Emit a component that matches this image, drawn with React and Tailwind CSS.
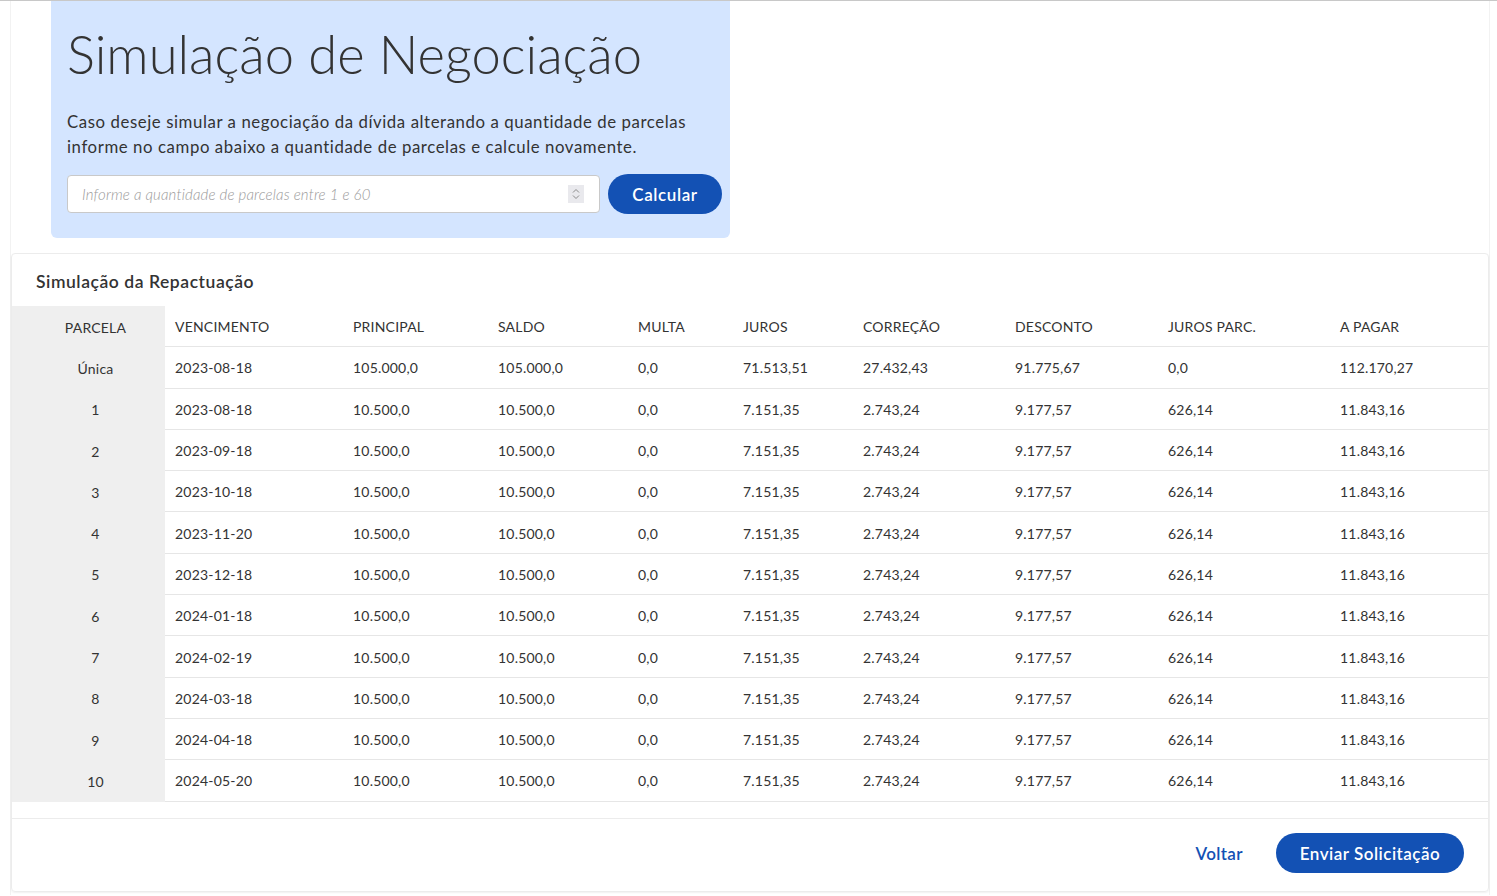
import React from 'react';

const FONT = { fontFamily: 'Lato, "Open Sans", sans-serif' };

const columns = [
  { key: 'parcela', label: 'PARCELA', width: 'w-[153px]' },
  { key: 'vencimento', label: 'VENCIMENTO', width: 'w-[178px]' },
  { key: 'principal', label: 'PRINCIPAL', width: 'w-[145px]' },
  { key: 'saldo', label: 'SALDO', width: 'w-[140px]' },
  { key: 'multa', label: 'MULTA', width: 'w-[105px]' },
  { key: 'juros', label: 'JUROS', width: 'w-[120px]' },
  { key: 'correcao', label: 'CORREÇÃO', width: 'w-[152px]' },
  { key: 'desconto', label: 'DESCONTO', width: 'w-[153px]' },
  { key: 'jurosParc', label: 'JUROS PARC.', width: 'w-[172px]' },
  { key: 'aPagar', label: 'A PAGAR', width: 'flex-1' },
];

const dates = [
  '2023-08-18',
  '2023-09-18',
  '2023-10-18',
  '2023-11-20',
  '2023-12-18',
  '2024-01-18',
  '2024-02-19',
  '2024-03-18',
  '2024-04-18',
  '2024-05-20',
];

const rows = [
  {
    parcela: 'Única',
    vencimento: '2023-08-18',
    principal: '105.000,0',
    saldo: '105.000,0',
    multa: '0,0',
    juros: '71.513,51',
    correcao: '27.432,43',
    desconto: '91.775,67',
    jurosParc: '0,0',
    aPagar: '112.170,27',
  },
  ...dates.map((d, i) => ({
    parcela: String(i + 1),
    vencimento: d,
    principal: '10.500,0',
    saldo: '10.500,0',
    multa: '0,0',
    juros: '7.151,35',
    correcao: '2.743,24',
    desconto: '9.177,57',
    jurosParc: '626,14',
    aPagar: '11.843,16',
  })),
];

function Row({ cells }) {
  return (
    <div className="flex h-[41.3px]">
      {columns.map((col, idx) =>
        idx === 0 ? (
          <div
            key={col.key}
            className={`${col.width} flex shrink-0 items-center justify-center bg-[#efefef] pl-[14px] pt-[1px]`}
          >
            {cells[col.key]}
          </div>
        ) : (
          <div
            key={col.key}
            className={`${col.width} flex shrink-0 items-center border-b border-[#e6e6e6] pl-[10px] pt-[1px]`}
          >
            {cells[col.key]}
          </div>
        ),
      )}
    </div>
  );
}

function Spinner() {
  return (
    <div className="absolute right-[16px] top-1/2 flex h-[18px] w-[16px] -translate-y-1/2 flex-col items-center justify-center bg-[#e9e9ed]">
      <svg width="8" height="5" viewBox="0 0 8 5" fill="none" stroke="#8a8a8a" strokeWidth="1">
        <path d="M1 4.5 4 1.5 7 4.5" />
      </svg>
      <svg width="8" height="5" viewBox="0 0 8 5" fill="none" stroke="#8a8a8a" strokeWidth="1" className="mt-[2px]">
        <path d="M1 0.5 4 3.5 7 0.5" />
      </svg>
    </div>
  );
}

export default function App() {
  const header = Object.fromEntries(columns.map((c) => [c.key, c.label]));

  return (
    <div className="min-h-[896px] border-t border-[#c8c8c8] bg-white text-[#333]" style={FONT}>
      <div className="ml-[10px] mr-[7px] border-x border-[#f2f2f2] pb-[3px]">
        <section className="ml-[40px] w-[679px] rounded-b-md bg-[#d4e5ff] px-4 pb-[24px] pt-[22px]">
          <h1 className="text-[52.5px] font-light leading-[62px] text-[#333]">
            Simulação de Negociação
          </h1>
          <p className="mt-[24px] text-[16.8px] leading-[25px] tracking-[0.58px] text-[#333]">
            Caso deseje simular a negociação da dívida alterando a quantidade de parcelas informe no campo abaixo a
            quantidade de parcelas e calcule novamente.
          </p>
          <div className="mt-[15px] flex items-center gap-2">
            <div className="relative shrink-0">
              <input
                type="text"
                placeholder="Informe a quantidade de parcelas entre 1 e 60"
                className="h-[38px] w-[533px] rounded-[4px] border border-[#c9c9c9] bg-white pl-[14px] text-[15px] font-light italic tracking-[0.15px] placeholder:text-[#9a9a9a] focus:outline-none"
              />
              <Spinner />
            </div>
            <button
              type="button"
              className="h-[40px] w-[114px] shrink-0 rounded-full bg-[#1351b4] pt-[2px] text-[17px] font-semibold tracking-[0.6px] text-white"
            >
              Calcular
            </button>
          </div>
        </section>

        <section className="mt-[15px] rounded-[4px] border border-[#ececec] shadow-[0_1px_2px_rgba(0,0,0,0.06)]">
          <h2 className="px-[24px] pb-[12px] pt-[16px] text-[17.5px] font-semibold leading-[24px] tracking-[0.55px]">
            Simulação da Repactuação
          </h2>
          <div className="text-[14px] tracking-[0.2px]">
            <Row cells={header} />
            {rows.map((r) => (
              <Row key={r.parcela} cells={r} />
            ))}
          </div>
          <div className="mt-[16px] flex items-center justify-end gap-[17px] border-t border-[#ececec] px-[24px] pb-[18px] pt-[14px]">
            <button
              type="button"
              className="h-[40px] px-4 pt-[3px] text-[17px] font-semibold tracking-[0.4px] text-[#1351b4]"
            >
              Voltar
            </button>
            <button
              type="button"
              className="h-[40px] w-[188px] rounded-full bg-[#1351b4] pt-[3px] text-[17px] font-semibold tracking-[0.5px] text-white"
            >
              Enviar Solicitação
            </button>
          </div>
        </section>
      </div>
    </div>
  );
}
